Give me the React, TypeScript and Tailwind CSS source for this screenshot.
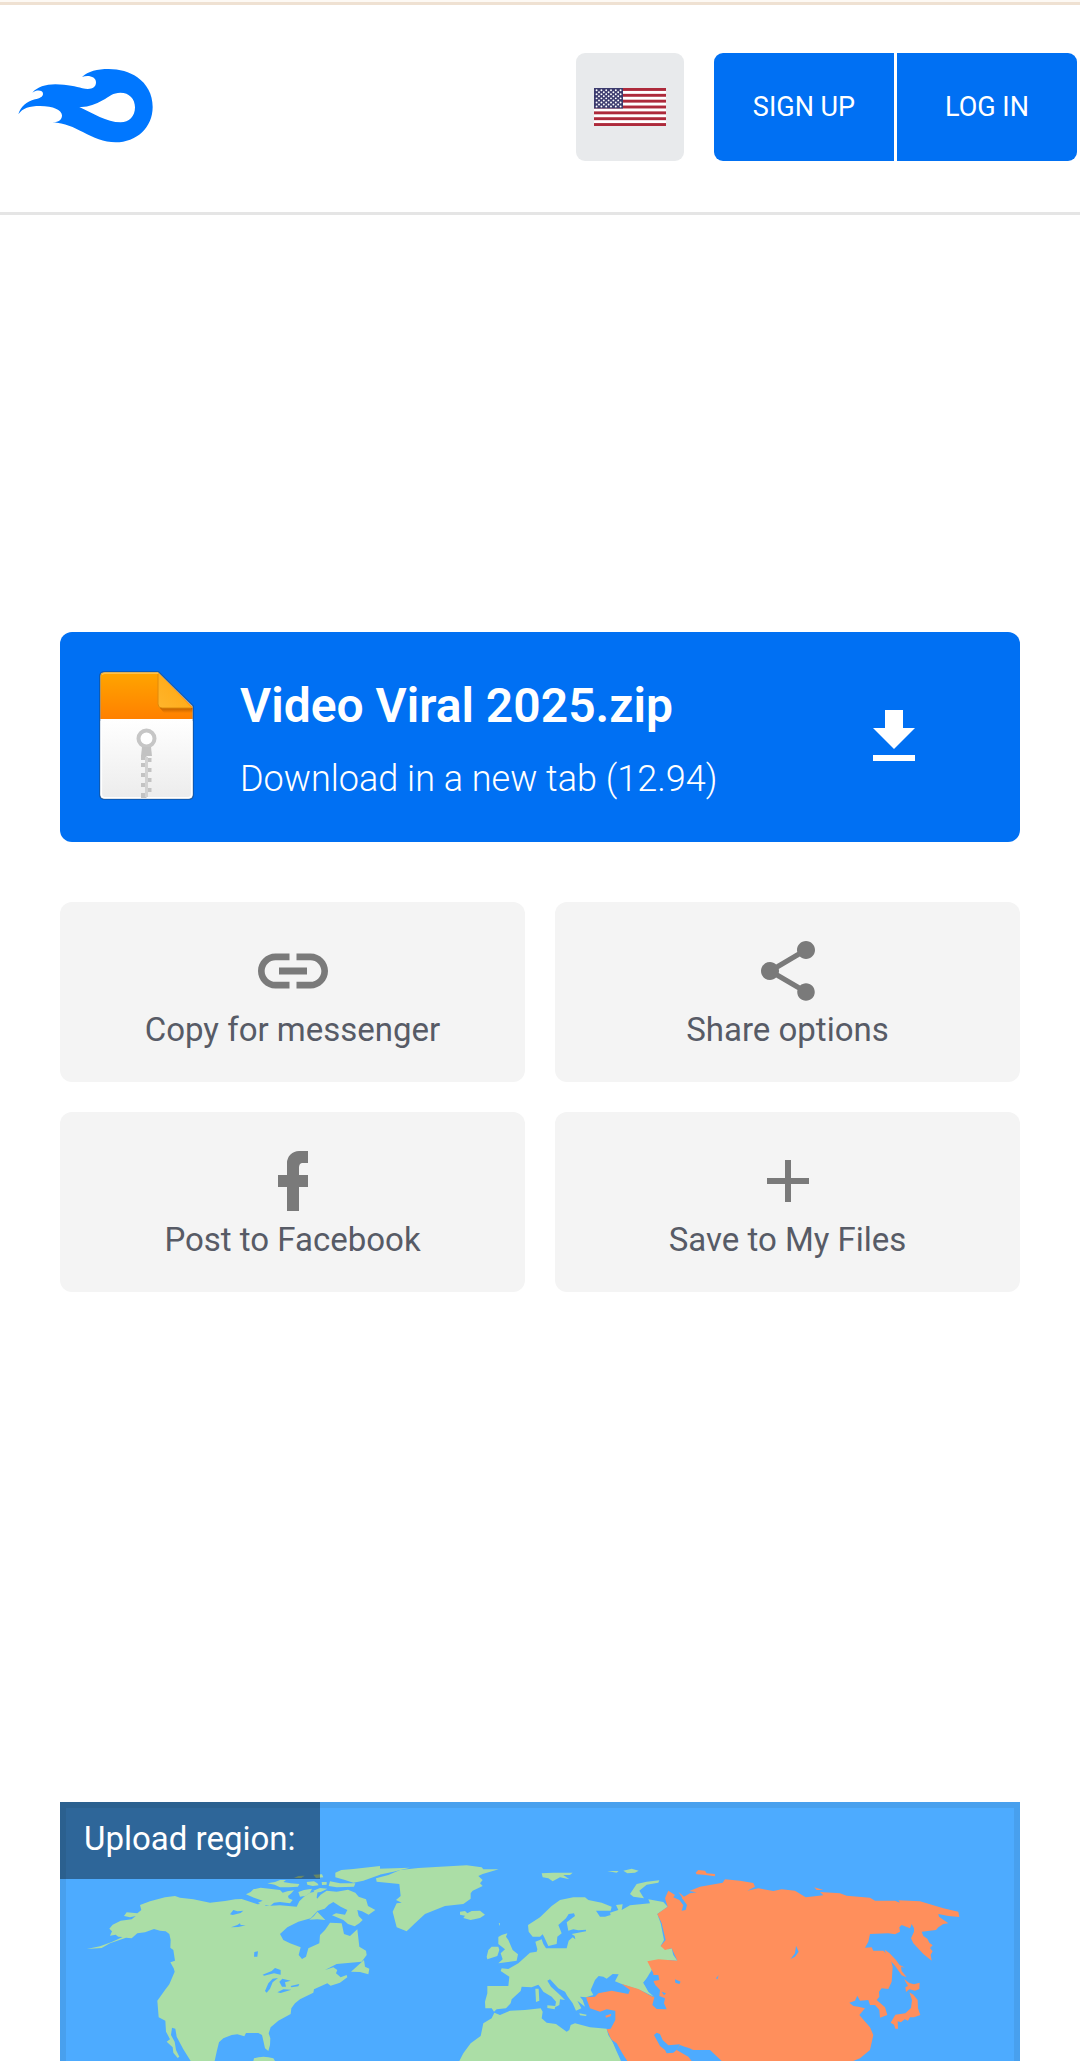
import React from "react";

function Logo() {
  return (
    <svg className="ml-[18px] h-[76px] w-[136px] shrink-0" viewBox="54 206 408 228" fill="#0077ff">
      <path
        fillRule="evenodd"
        d="M246 233C264 216 292 209 326 209C358 209 389 217 412 234C440 254 458 284 458 323C458 385 409 429 347 429C311 429 280 415 250 399C220 384 196 371 157 369C174 370 186 363 186 348C184 331 161 321 120 320C88 320 68 326 55 345C62 322 79 307 105 300C119 296 129 293 129 283C129 273 111 270 97 280C112 263 136 255 166 255C204 256 228 262 247 267C272 272 288 267 288 249C288 231 264 226 246 233ZM238 323C262 325 285 316 308 303C329 291 339 280 361 280C388 280 405 299 405 324C405 351 387 369 362 369C319 369 279 341 238 323Z"
      />
    </svg>
  );
}

function Flag() {
  const stars: React.ReactNode[] = [];
  for (let r = 0; r < 9; r++) {
    const odd = r % 2 === 1;
    for (let c = 0; c < (odd ? 5 : 6); c++) {
      stars.push(<circle key={`${r}-${c}`} cx={2.6 + c * 4.8 + (odd ? 2.4 : 0)} cy={2.2 + r * 2.04} r={0.95} fill="#fff" />);
    }
  }
  return (
    <svg className="h-[38px] w-[72px]" viewBox="0 0 72 38">
      <rect width="72" height="38" fill="#fff" />
      {[0, 1, 2, 3, 4, 5, 6].map((i) => (
        <rect key={i} y={(i * 2 * 38) / 13} width="72" height={38 / 13} fill="#ad2a3b" />
      ))}
      <rect width="29" height="20.5" fill="#3c3b6e" />
      {stars}
    </svg>
  );
}

function ZipIcon() {
  return (
    <svg className="-mt-[2px] h-[132px] w-[98px] shrink-0" viewBox="0 0 98 132">
      <defs>
        <linearGradient id="orange" x1="0" y1="0" x2="0" y2="1">
          <stop offset="0" stopColor="#ffa500" />
          <stop offset="1" stopColor="#ff8000" />
        </linearGradient>
        <linearGradient id="paper" x1="0" y1="0" x2="0" y2="1">
          <stop offset="0" stopColor="#ffffff" />
          <stop offset="1" stopColor="#ececec" />
        </linearGradient>
        <linearGradient id="fold" x1="0" y1="1" x2="1" y2="0">
          <stop offset="0" stopColor="#ffb52c" />
          <stop offset="1" stopColor="#ffa50c" />
        </linearGradient>
        <linearGradient id="shade" x1="0" y1="0" x2="0" y2="1">
          <stop offset="0" stopColor="#a85000" stopOpacity=".75" />
          <stop offset="1" stopColor="#a85000" stopOpacity="0" />
        </linearGradient>
      </defs>
      <path d="M6 2H60.500L95 36V125Q95 129 91 129H6Q2 129 2 125V6Q2 2 6 2Z" fill="#fff" stroke="#174b88" strokeOpacity=".75" strokeWidth="1.600" />
      <path d="M2.500 49H94.500V124.500Q94.500 128.500 90.500 128.500H6.500Q2.500 128.500 2.500 124.500Z" fill="url(#paper)" />
      <path d="M3.300 51V124Q3.300 127.700 7 127.700H90Q93.700 127.700 93.700 124V51" fill="none" stroke="#fff" strokeWidth="1.600" />
      <path d="M6.500 2.500H60L94.500 37V49H2.500V6.500Q2.500 2.500 6.500 2.500Z" fill="url(#orange)" />
      <path d="M4 4.500Q5 3.200 7 3.200H60" fill="none" stroke="#ffc14a" strokeWidth="1.400" />
      <path d="M62 38H94.500V43H66Z" fill="url(#shade)" />
      <path d="M60 3V34Q60 38 64 38H94Z" fill="url(#fold)" />
      <path d="M60 4V34Q60 38 64 38H93" fill="none" stroke="#e08a0a" strokeWidth="1" />
      <circle cx="48.500" cy="68.500" r="8" fill="#fff" stroke="#c6c6c6" strokeWidth="4" />
      <path d="M44 77H53L54 86H43Z" fill="#c2c2c2" />
      <path d="M43 85h5.500v5h-5.500zM48.500 88h5v4h-5zM43 93h5.500v4h-5.500zM48.500 98h5v4h-5zM43 103h5.500v4h-5.500zM48.500 108h5v4h-5zM43 113h5.500v4h-5.500zM48.500 118h5v4h-5zM43 123h5.500v5h-5.500z" fill="#c3c3c3" />
      <path d="M47 87h3v40h-3z" fill="#d2d2d2" />
    </svg>
  );
}

function ActionCard({ icon, label }: { icon: React.ReactNode; label: string }) {
  return (
    <button className="flex h-[180px] flex-col items-center rounded-xl bg-[#f4f4f4] pt-[33px] text-[#575b66]">
      <span className="flex h-[72px] items-center justify-center text-[#7a7a7a]">{icon}</span>
      <span className="text-[33px] leading-[45px]">{label}</span>
    </button>
  );
}

const LAND = "#abdea6";
const ACTIVE = "#ff8f5c";
const SEA = "#4dabff";

function WorldMap() {
  return (
    <svg className="block h-[259px] w-[960px]" viewBox="30 36 2880 777">
      {/* North America */}
      <g fill={LAND}>
        <path d="M110 477L150 469 185 456 218 441 205 440 197 434 180 437 186 424 178 416 188 404 212 392 245 388 257 378 240 382 222 378 230 367 262 370 274 360 270 345 300 334 345 322 375 318 390 323 430 328 480 338 525 333 556 328 575 327 600 335 622 343 640 341 648 348 690 346 740 350 748 334 762 320 780 308 803 304 800 322 805 342 828 348 803 362 782 385 745 395 712 412 690 432 700 450 720 460 752 472 746 495 756 507 768 500 775 475 808 460 810 435 825 420 840 398 875 400 882 432 900 438 922 418 928 470 948 482 950 495 935 515 860 522 825 540 850 532 862 540 858 550 872 562 890 555 892 562 870 578 842 587 832 580 792 598 790 608 750 628 735 640 724 655 722 672 685 692 662 712 656 730 661 745 660 765 655 783 645 775 640 752 636 735 625 729 588 729 583 739 562 733 545 735 520 745 507 757 500 785 494 813H422L400 778 380 740 376 716 366 713 363 735 374 755 378 780 388 800 383 804 370 788 368 772 350 755 360 748 348 725 346 692 326 682 322 632 345 600 358 583 374 545 371 535 361 517 375 512 370 480 361 473 362 450 358 432 347 424 330 422 312 417 285 427 262 430 245 445 228 443 180 460 155 474Z" />
        {/* Canadian Arctic Archipelago */}
        <g transform="translate(540 210)">
          <path d="M48 103L62 96 70 88 92 83 118 86 150 90 158 98 172 94 192 91 184 100 174 108 176 115 188 120 180 130 150 126 132 128 120 138 92 133 84 128 98 122 72 113Z" />
          <path d="M205 96L222 90 246 86 240 98 228 107 210 110ZM250 92L270 84 292 86 272 96 254 98ZM112 70L135 66 150 60 168 60 160 66 182 70 208 72 204 80 176 82 150 82 134 74ZM192 54L205 48 224 47 214 54ZM230 66L252 64 262 70 266 76 248 78 232 74ZM275 66L290 66 290 74 276 75ZM250 44L276 43 280 52 258 54Z" />
          <path d="M272 104L290 92 320 95 354 89 376 98 386 110 408 118 414 138 436 150 416 164 396 154 382 150 386 168 398 180 388 190 374 199 354 192 340 180 306 166 318 160 345 164 352 150 332 140 310 126 296 134 284 146 264 152 260 118Z" />
          <path d="M238 179L252 168 262 155 286 180 262 178ZM316 38L334 30 370 27 450 18V44L400 62 370 68 345 60 316 52ZM300 64L330 70 376 70 372 80 320 82 296 78Z" />
        </g>
        <path d="M960 237L1080 233 1030 245 970 258Z" />
        <path d="M903 545L942 510 945 530 958 536 955 553 930 546ZM612 805Q640 795 670 805L675 813 610 813Z" />
        <path d="M978 265L1015 255 1050 240 1105 234 1170 230 1250 226 1295 232 1300 238 1346 238 1298 252 1285 258 1298 270 1290 280 1298 288 1268 302 1262 310 1262 326 1240 342 1185 348 1125 372 1095 400 1070 424 1040 412 1028 365 1040 340 1055 338 1038 330 1052 318 1048 282 980 275Z" />
        <path d="M1230 365L1245 363 1252 370 1265 363 1290 362 1305 374 1290 384 1262 390 1240 384 1245 377 1230 374Z" />
      </g>
      <g fill={SEA}>
        <path d="M540 373L550 360 562 364 580 362 572 369 548 375ZM543 412L562 405 570 400 572 405 587 406 565 411ZM613 486L624 484 622 500 612 500ZM638 554L665 543 675 534 692 540 692 554 672 550 642 557ZM645 603L655 580 668 566 684 564 668 577 660 596 650 608ZM688 575L697 566 722 572 705 577 708 590 696 590ZM682 607L700 598 724 599 692 609ZM722 588L748 582 745 589 724 592Z" />
      </g>

      <g transform="translate(1470 0)">
        {/* Europe and Africa */}
        <g fill={LAND}>
          <path d="M-158 588L-95 588 -92 560 -118 543 -115 535 -95 537 -65 520 -30 488 -10 485 -8 478 -14 455 5 448 10 462 18 475 80 475 86 452 98 442 106 448 104 438 95 432 138 424 138 419 115 421 100 418 85 422 80 397 105 378 102 370 86 372 78 385 55 405 65 430 52 440 50 462 25 468 12 440 8 433 0 440 -22 440 -34 425 -36 405 0 382 35 348 60 330 100 322 135 322 145 330 185 338 215 350 212 362 168 362 180 380 195 380 212 375 210 368 235 360 228 345 248 343 245 360 270 346 330 340 325 328 370 336 383 350 352 372 362 400 372 450 362 468 385 478 395 475 400 495 412 512 380 510 345 515 335 540 320 565 310 578 325 600 345 622 300 600 245 582 225 574 236 553 218 552 200 566 190 560 176 558 165 570 152 600 160 615 138 622 120 620 128 630 135 650 112 632 124 655 108 662 98 640 82 618 75 605 55 595 30 568 22 572 33 590 60 615 75 630 60 628 58 645 45 652 48 635 35 620 10 605 0 590 -5 584 -25 592 -55 590 -58 603 -85 628 -88 640 -102 655 -130 658 -138 665 -145 655 -164 655 -165 635 -158 610Z" />
          <path d="M-137 668L-120 675 -90 662 -45 660 2 655 8 665 5 685 20 698 48 702 80 725 88 720 92 705 105 700 150 712 200 716 205 735 220 760 246 813H-242L-230 790 -208 760 -178 738 -170 700 -145 685Z" />
          <path d="M-125 441L-115 435 -98 430 -102 440 -95 450 -82 480 -66 493 -70 512 -125 520 -112 508 -118 490 -105 478 -125 462ZM-160 500L-155 480 -145 470 -125 470 -122 480 -128 498 -158 508ZM-14 596L-4 596 -2 632 -12 636ZM22 646L46 648 44 658 22 654ZM118 670L140 674 138 678 120 676ZM-124 400L-120 400 -120 408Z" />
          <path d="M5 250L40 248 98 248 90 255 70 255 88 268 60 262 38 274 25 265 8 262ZM202 243L236 243 230 248ZM250 242L275 236 296 242 285 248 262 250ZM270 312L290 282 320 275 358 271 355 278 320 284 298 302 312 325 280 320Z" />
        </g>
        {/* Asia */}
        <g fill={ACTIVE}>
          <path d="M352 372L383 350 375 325 385 302 405 315 400 322 418 330 430 345 425 320 415 305 432 320 450 310 470 307 448 303 480 290 548 278 555 268 600 272 640 279 645 290 622 302 655 295 700 303 725 298 765 302 797 322 850 316 840 306 900 310 920 317 990 323 1005 332 1065 332 1080 338 1075 331 1140 334 1210 355 1255 365 1258 381 1225 378 1195 372 1197 380 1225 400 1210 402 1195 412 1188 420 1145 425 1150 438 1162 446 1168 458 1178 466 1170 474 1178 484 1172 494 1175 512 1150 492 1120 460 1113 445 1122 425 1122 415 1115 402 1110 415 1085 405 1078 412 1080 425 1065 433 1045 430 990 432 985 455 975 473 995 472 1000 482 1030 482 1050 502 1058 530 1055 575 1045 597 1025 595 1017 605 1018 620 1010 630 1035 652 1042 675 1020 683 1018 660 1005 645 990 645 985 630 960 632 952 617 945 632 928 638 940 648 955 650 975 655 958 675 990 712 1000 735 990 780 960 805 940 813H545L510 780 460 780 420 765 410 780 445 800 455 813H262L235 775 212 745 200 718 212 716 226 690 226 662 200 658 180 665 150 655 138 622 165 620 175 610 215 602 265 612 270 600 245 582 295 597 340 622 340 550 322 514 355 508 412 512 395 475 375 480 362 468 377 450 365 400Z" />
          <path d="M467 248L475 240 495 242 500 250 525 252 525 259 490 254 470 253ZM196 677L214 671 212 679 198 683ZM823 292L850 300 830 300Z" />
          <path d="M1034 479L1048 489 1068 510 1078 524 1095 533 1083 530 1085 543 1100 562 1085 556 1065 527 1040 500ZM1092 567L1108 579 1122 583 1139 578 1138 597 1125 602 1108 598 1098 606 1096 592 1104 588ZM1108 607L1120 614 1133 630 1134 655 1141 675 1122 682 1110 682 1104 692 1094 688 1083 697 1073 694 1074 716 1066 716 1062 704 1052 698 1066 674 1096 670 1113 654 1116 630Z" />
        </g>
        {/* Inland seas, gulfs and lakes */}
        <g fill={SEA}>
          <path d="M310 578L330 555 355 555 358 570 340 573 346 585 360 600 358 618 375 625 372 640 380 658 350 657 337 645 343 622 325 605ZM342 735L350 728 360 732 368 750 385 766 420 763 412 778 400 788 380 790 375 780 360 768ZM216 750L230 760 260 813H243L228 780ZM405 568L422 575 418 582 406 578ZM365 605L378 610 372 616ZM768 467L776 485 765 500 752 507 765 490ZM528 565L536 556 532 568ZM412 310L430 330 441 345 437 360 425 362 430 345 418 325ZM418 770L455 775 425 778Z" />
        </g>
      </g>
    </svg>
  );
}

export default function App() {
  return (
    <div className="h-[2061px] w-[1080px] overflow-hidden bg-white font-[Roboto,sans-serif]">
      <div className="h-[5px] border-b-[3px] border-[#efe1d2] bg-[#fdf9f4]" />
      <header className="flex h-[210px] items-start border-b-[3px] border-[#e5e5e5] pt-12 pr-[3px]">
        <div className="flex h-[106px] items-center">
          <Logo />
        </div>
        <button className="ml-auto flex h-[108px] w-[108px] items-center justify-center rounded-[9px] bg-[#e8eaec]">
          <Flag />
        </button>
        <div className="ml-[30px] flex gap-[3px] text-[27px] text-white">
          <button className="h-[108px] w-[180px] rounded-l-[9px] bg-[#0070f3]">SIGN UP</button>
          <button className="h-[108px] w-[180px] rounded-r-[9px] bg-[#0070f3]">LOG IN</button>
        </div>
      </header>

      <main className="px-[60px] pt-[417px]">
        <a className="flex h-[210px] items-center rounded-xl bg-[#0070f3] pr-[90px] pl-[38px] text-white">
          <ZipIcon />
          <div className="ml-11 pt-1">
            <div className="text-[48px] leading-[60px] font-semibold whitespace-nowrap">Video Viral 2025.zip</div>
            <div className="mt-[19px] text-[36px] leading-[48px] font-light whitespace-nowrap">Download in a new tab (12.94)</div>
          </div>
          <svg className="ml-auto h-[72px] w-[72px]" viewBox="0 0 24 24" fill="currentColor">
            <path d="M19 9h-4V3H9v6H5l7 7 7-7zM5 18v2h14v-2H5z" />
          </svg>
        </a>

        <div className="mt-[60px] grid grid-cols-2 gap-[30px]">
          <ActionCard
            label="Copy for messenger"
            icon={
              <svg className="h-[84px] w-[84px]" viewBox="0 0 24 24" fill="currentColor">
                <path d="M3.900 12c0-1.710 1.390-3.100 3.100-3.100h4V7H7c-2.760 0-5 2.240-5 5s2.240 5 5 5h4v-1.900H7c-1.710 0-3.100-1.390-3.100-3.100zM8 13h8v-2H8v2zm9-6h-4v1.900h4c1.710 0 3.100 1.390 3.100 3.100s-1.390 3.100-3.100 3.100h-4V17h4c2.760 0 5-2.240 5-5s-2.240-5-5-5z" />
              </svg>
            }
          />
          <ActionCard
            label="Share options"
            icon={
              <svg className="h-[72px] w-[72px]" viewBox="0 0 24 24" fill="currentColor">
                <path d="M18 16.080c-.76 0-1.440.3-1.960.77L8.910 12.700c.05-.23.09-.46.09-.7s-.04-.47-.09-.7l7.050-4.110c.54.5 1.250.81 2.040.81 1.660 0 3-1.340 3-3s-1.340-3-3-3-3 1.340-3 3c0 .24.04.47.09.7L8.040 9.810C7.500 9.310 6.790 9 6 9c-1.660 0-3 1.340-3 3s1.340 3 3 3c.79 0 1.500-.31 2.040-.81l7.120 4.160c-.05.21-.08.43-.08.65 0 1.610 1.310 2.920 2.920 2.920s2.920-1.310 2.920-2.920-1.310-2.920-2.920-2.920z" />
              </svg>
            }
          />
          <ActionCard
            label="Post to Facebook"
            icon={
              <svg className="h-[72px] w-[72px]" viewBox="0 0 24 24" fill="currentColor">
                <path d="M17 2v4h-2c-.69 0-1 .81-1 1.500V10h3v4h-3v8h-4v-8H7v-4h3V6a4 4 0 0 1 4-4h3z" />
              </svg>
            }
          />
          <ActionCard
            label="Save to My Files"
            icon={
              <svg className="h-[72px] w-[72px]" viewBox="0 0 24 24" fill="currentColor">
                <path d="M19 13h-6v6h-2v-6H5v-2h6V5h2v6h6v2z" />
              </svg>
            }
          />
        </div>

        <section className="relative mt-[510px] h-[259px] overflow-hidden bg-[#4dabff]">
          <WorldMap />
          <div className="absolute inset-0 border-x-[6px] border-t-[6px] border-[#48a0ee]" />
          <div className="absolute top-0 left-0 h-[77px] w-[260px] bg-black/40 pl-6 text-[33px] leading-[73px] whitespace-nowrap text-white">
            Upload region:
          </div>
        </section>
      </main>
    </div>
  );
}
